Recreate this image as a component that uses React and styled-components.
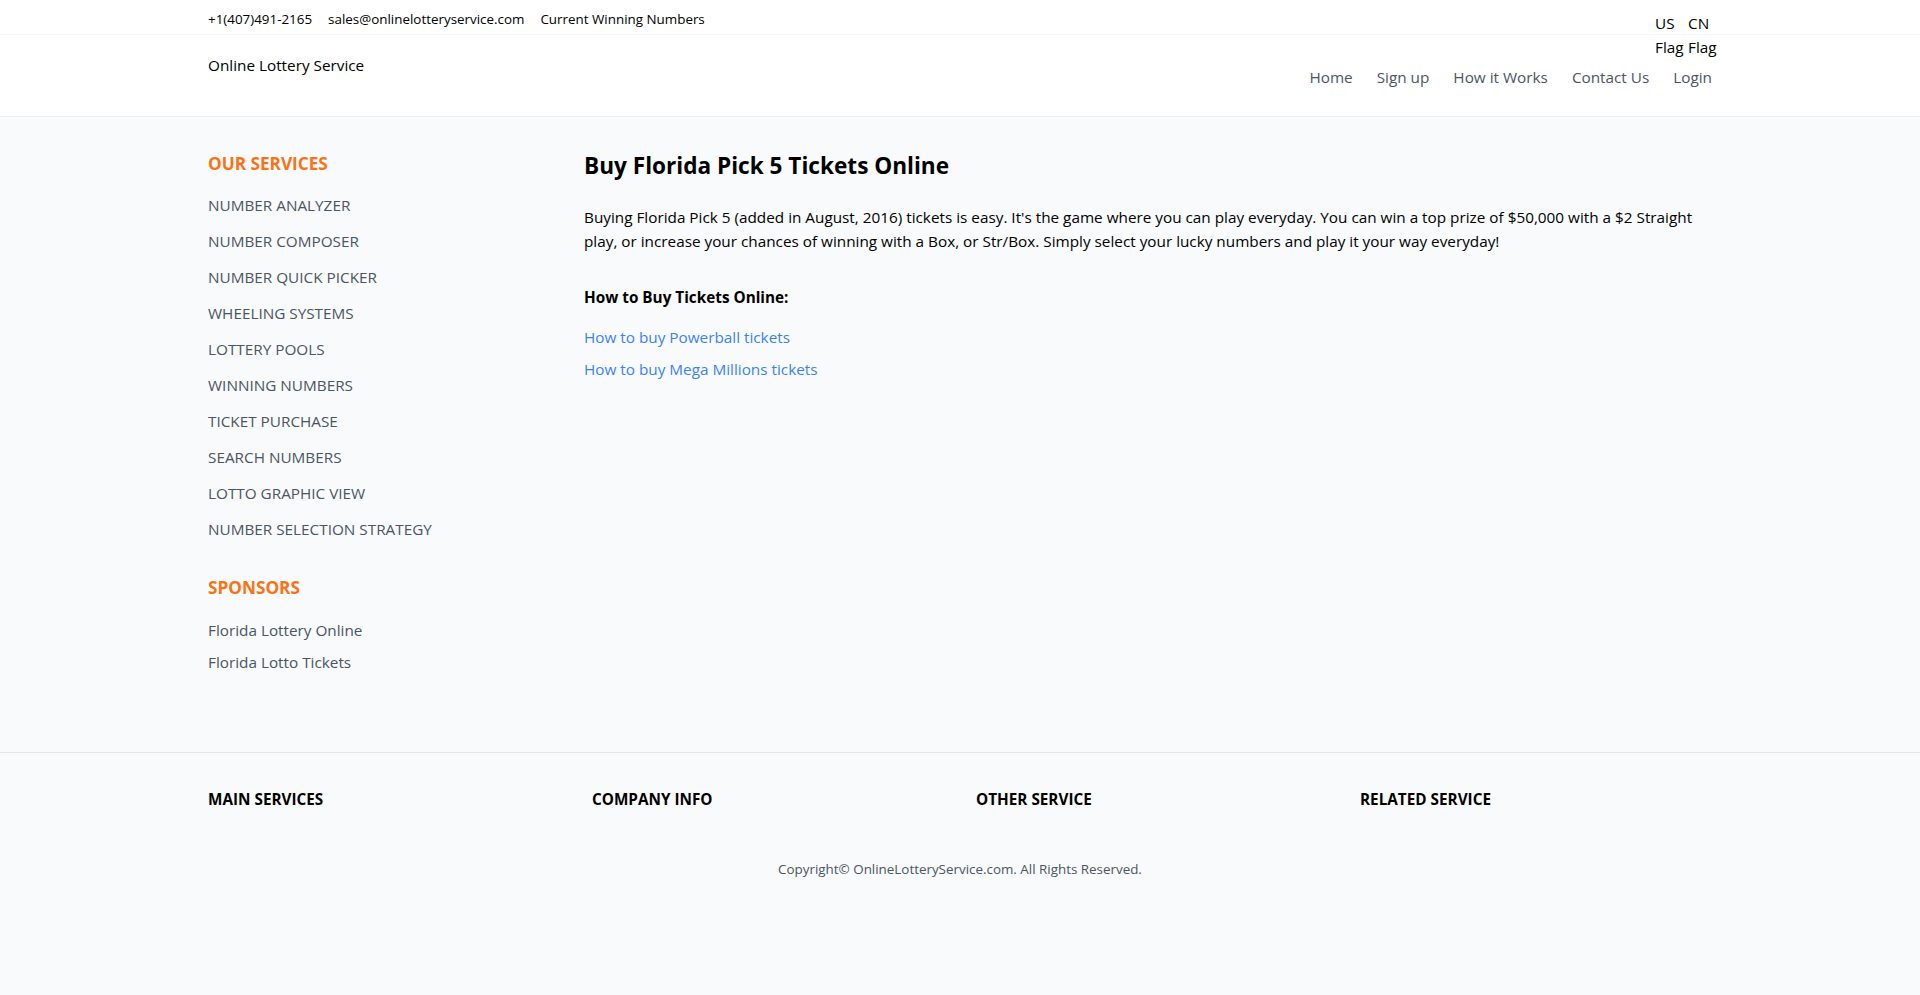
import React from 'react';
import styled, { createGlobalStyle } from 'styled-components';

const GlobalStyle = createGlobalStyle`
  body {
    margin: 0;
    background: #f9fafb;
    font-family: 'Open Sans', 'Noto Sans', sans-serif;
    color: #000;
  }
  * { box-sizing: border-box; }
`;

const Container = styled.div`
  max-width: 1536px;
  margin: 0 auto;
  padding: 0 16px;
`;

const Header = styled.header`
  background: #fff;
  border-bottom: 1px solid #eceef1;
`;

const TopBar = styled.div`
  border-bottom: 1px solid #f5f6f7;
  height: 35px;
`;

const TopRow = styled(Container)`
  display: flex;
  justify-content: space-between;
  height: 35px;
`;

const Contacts = styled.div`
  display: flex;
  gap: 16px;
  font-size: 13.4px;
  padding-top: 8px;
  line-height: 22px;
`;

const Flags = styled.div`
  display: flex;
  gap: 3px;
  height: 35px;
  padding-top: 11px;
  margin-right: -6px;
`;

const Flag = styled.span`
  display: inline-block;
  width: 30px;
  font-size: 15.3px;
  line-height: 24px;
`;

const MainRow = styled(Container)`
  display: flex;
  justify-content: space-between;
  height: 81px;
`;

const Logo = styled.div`
  font-size: 15.3px;
  line-height: 24px;
  padding-top: 18px;
`;

const Nav = styled.nav`
  display: flex;
  gap: 24px;
  padding-top: 30px;
`;

const NavLink = styled.a`
  color: #4b5563;
  font-size: 15.3px;
  line-height: 24px;
  text-decoration: none;
`;

const Body = styled(Container)`
  display: flex;
  padding-top: 33px;
  padding-bottom: 78px;
`;

const Sidebar = styled.aside`
  width: 25%;
`;

const SideTitle = styled.h3`
  color: #f97316;
  font-size: 17.2px;
  font-weight: 700;
  margin: 0 0 ${(p) => p.gap || 12}px;
  line-height: 28px;
`;

const SideList = styled.ul`
  list-style: none;
  margin: 0 0 ${(p) => p.mb || 0}px;
  padding: 0;
  display: flex;
  flex-direction: column;
  gap: ${(p) => p.gap}px;
`;

const SideItem = styled.li`
  color: #4b5563;
  font-size: 15.3px;
  line-height: 24px;
  text-transform: ${(p) => (p.upper ? 'uppercase' : 'none')};
`;

const Main = styled.main`
  width: 75%;
`;

const Title = styled.h1`
  font-size: 22.6px;
  font-weight: 700;
  line-height: 32px;
  margin: 0 0 23px;
`;

const Para = styled.p`
  font-size: 15.3px;
  line-height: 24px;
  margin: 0 0 32px;
`;

const SubTitle = styled.h4`
  font-size: 15.3px;
  font-weight: 700;
  line-height: 24px;
  margin: 0 0 16px;
`;

const Links = styled.div`
  display: flex;
  flex-direction: column;
  gap: 8px;
`;

const BlueLink = styled.a`
  color: #3b82f6;
  font-size: 15.3px;
  line-height: 24px;
  text-decoration: none;
`;

const Footer = styled.footer`
  border-top: 1px solid #e5e7eb;
  padding: 34px 0 90px;
`;

const FooterGrid = styled.div`
  display: grid;
  grid-template-columns: repeat(4, 1fr);
  gap: 32px;
`;

const FooterTitle = styled.h5`
  font-size: 15.3px;
  font-weight: 700;
  line-height: 24px;
  margin: 0;
  text-transform: uppercase;
`;

const Copyright = styled.p`
  text-align: center;
  color: #4b5563;
  font-size: 13.4px;
  line-height: 20px;
  margin: 48px 0 0;
`;

const services = [
  'Number Analyzer',
  'Number Composer',
  'Number Quick Picker',
  'Wheeling Systems',
  'Lottery Pools',
  'Winning Numbers',
  'Ticket Purchase',
  'Search Numbers',
  'Lotto Graphic View',
  'Number Selection Strategy',
];

export default function App() {
  return (
    <>
      <GlobalStyle />
      <Header>
        <TopBar>
          <TopRow>
            <Contacts>
              <span>+1(407)491-2165</span>
              <span>sales@onlinelotteryservice.com</span>
              <span>Current Winning Numbers</span>
            </Contacts>
            <Flags>
              <Flag>US Flag</Flag>
              <Flag>CN Flag</Flag>
            </Flags>
          </TopRow>
        </TopBar>
        <MainRow>
          <Logo>Online Lottery Service</Logo>
          <Nav>
            <NavLink href="#">Home</NavLink>
            <NavLink href="#">Sign up</NavLink>
            <NavLink href="#">How it Works</NavLink>
            <NavLink href="#">Contact Us</NavLink>
            <NavLink href="#">Login</NavLink>
          </Nav>
        </MainRow>
      </Header>

      <Body>
        <Sidebar>
          <SideTitle gap={15}>OUR SERVICES</SideTitle>
          <SideList gap={12} mb={33}>
            {services.map((s) => (
              <SideItem upper key={s}>{s}</SideItem>
            ))}
          </SideList>
          <SideTitle gap={16}>SPONSORS</SideTitle>
          <SideList gap={8}>
            <SideItem>Florida Lottery Online</SideItem>
            <SideItem>Florida Lotto Tickets</SideItem>
          </SideList>
        </Sidebar>
        <Main>
          <Title>Buy Florida Pick 5 Tickets Online</Title>
          <Para>
            Buying Florida Pick 5 (added in August, 2016) tickets is easy. It's the game where you can play
            everyday. You can win a top prize of $50,000 with a $2 Straight play, or increase your chances of
            winning with a Box, or Str/Box. Simply select your lucky numbers and play it your way everyday!
          </Para>
          <SubTitle>How to Buy Tickets Online:</SubTitle>
          <Links>
            <BlueLink href="#">How to buy Powerball tickets</BlueLink>
            <BlueLink href="#">How to buy Mega Millions tickets</BlueLink>
          </Links>
        </Main>
      </Body>

      <Footer>
        <Container>
          <FooterGrid>
            <FooterTitle>Main Services</FooterTitle>
            <FooterTitle>Company Info</FooterTitle>
            <FooterTitle>Other Service</FooterTitle>
            <FooterTitle>Related Service</FooterTitle>
          </FooterGrid>
          <Copyright>Copyright© OnlineLotteryService.com. All Rights Reserved.</Copyright>
        </Container>
      </Footer>
    </>
  );
}
